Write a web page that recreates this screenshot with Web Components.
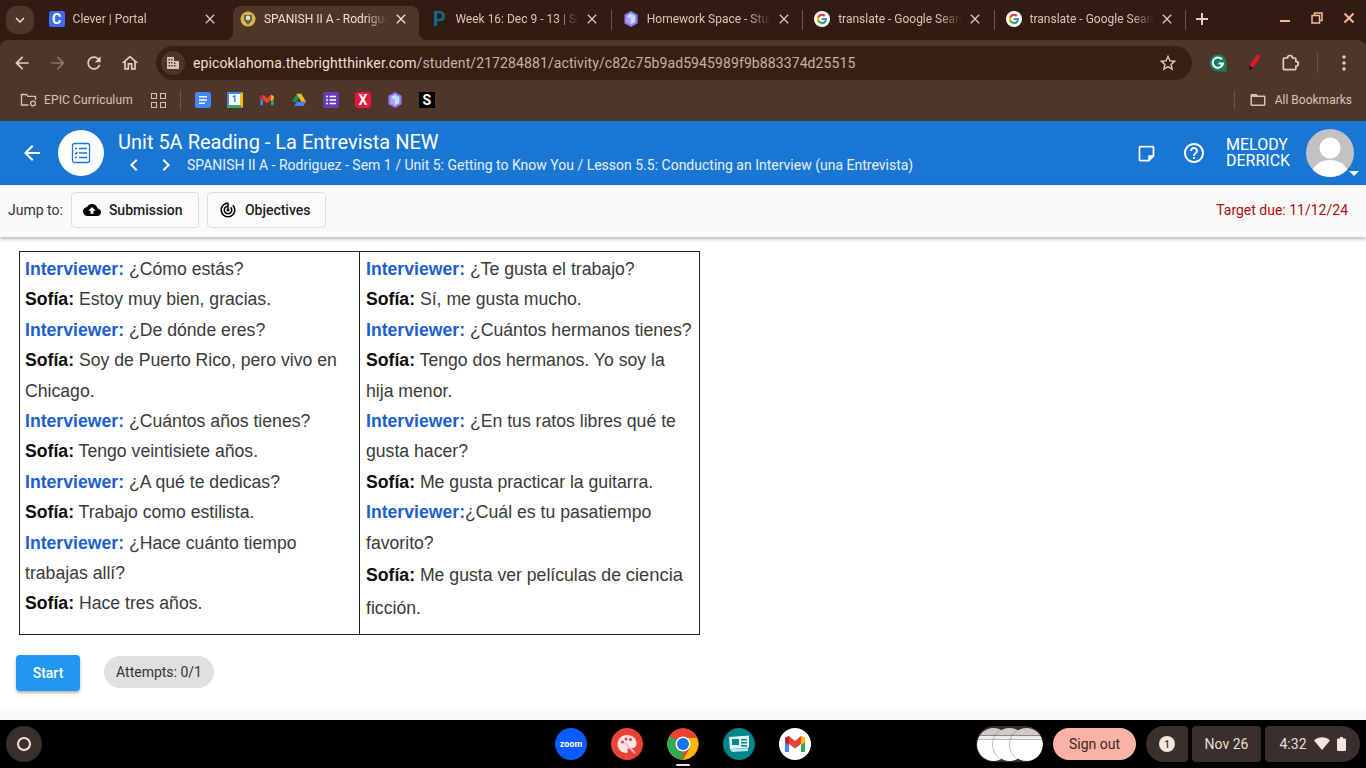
<!DOCTYPE html>
<html lang="en">
<head>
<meta charset="utf-8">
<title>Unit 5A Reading</title>
<style>
  html, body { margin: 0; height: 100%; overflow: hidden; background: #fff; font-family: Roboto, "Liberation Sans", sans-serif; }
  body { display: flex; flex-direction: column; width: 1366px; height: 768px; }
  main-area { flex: 1; }
</style>
</head>
<body>
<browser-frame></browser-frame>
<app-header></app-header>
<jump-bar></jump-bar>
<main-area>
  <interview-table>
    <talk-line slot="left" who="i">¿Cómo estás?</talk-line>
    <talk-line slot="left" who="s">Estoy muy bien, gracias.</talk-line>
    <talk-line slot="left" who="i">¿De dónde eres?</talk-line>
    <talk-line slot="left" who="s">Soy de Puerto Rico, pero vivo en Chicago.</talk-line>
    <talk-line slot="left" who="i">¿Cuántos años tienes?</talk-line>
    <talk-line slot="left" who="s">Tengo veintisiete años.</talk-line>
    <talk-line slot="left" who="i">¿A qué te dedicas?</talk-line>
    <talk-line slot="left" who="s">Trabajo como estilista.</talk-line>
    <talk-line slot="left" who="i">¿Hace cuánto tiempo trabajas allí?</talk-line>
    <talk-line slot="left" who="s">Hace tres años.</talk-line>
    <talk-line slot="right" who="i">¿Te gusta el trabajo?</talk-line>
    <talk-line slot="right" who="s">Sí, me gusta mucho.</talk-line>
    <talk-line slot="right" who="i">¿Cuántos hermanos tienes?</talk-line>
    <talk-line slot="right" who="s">Tengo dos hermanos. Yo soy la hija menor.</talk-line>
    <talk-line slot="right" who="i">¿En tus ratos libres qué te gusta hacer?</talk-line>
    <talk-line slot="right" who="s">Me gusta practicar la guitarra.</talk-line>
    <talk-line slot="right" who="i" tight>¿Cuál es tu pasatiempo favorito?</talk-line>
    <talk-line slot="right" who="s" tall>Me gusta ver películas de <span style="font-size:18.4px">ciencia</span> ficción.</talk-line>
  </interview-table>
  <start-row></start-row>
</main-area>
<page-foot></page-foot>
<os-shelf></os-shelf>

<script>
const svg = (d, size, fill, extra = '') =>
  `<svg width="${size}" height="${size}" viewBox="0 0 24 24" fill="${fill}" ${extra}><path d="${d}"/></svg>`;

const ICON = {
  back: 'M20 11H7.83l5.59-5.59L12 4l-8 8 8 8 1.41-1.41L7.83 13H20v-2z',
  forward: 'M12 4l-1.41 1.41L16.17 11H4v2h12.17l-5.58 5.59L12 20l8-8z',
  reload: 'M17.65 6.35C16.2 4.9 14.21 4 12 4c-4.42 0-7.99 3.58-7.99 8s3.57 8 7.99 8c3.73 0 6.84-2.55 7.73-6h-2.08c-.82 2.33-3.04 4-5.65 4-3.31 0-6-2.69-6-6s2.69-6 6-6c1.66 0 3.14.69 4.22 1.78L13 11h7V4l-2.35 2.35z',
  home: 'M12 5.69l5 4.5V18h-2v-6H9v6H7v-7.81l5-4.5M12 3L2 12h3v8h6v-6h2v6h6v-8h3L12 3z',
  star: 'M22 9.24l-7.19-.62L12 2 9.19 8.63 2 9.24l5.46 4.73L5.82 21 12 17.27 18.18 21l-1.63-7.03L22 9.24zM12 15.4l-3.76 2.27 1-4.28-3.32-2.88 4.38-.38L12 6.1l1.71 4.04 4.38.38-3.32 2.88 1 4.28L12 15.4z',
  puzzle: 'M5 6h4c0-2 1-3 3-3s3 1 3 3h3a1 1 0 0 1 1 1v3c2 0 3 1 3 3s-1 3-3 3v3a1 1 0 0 1-1 1H5a1 1 0 0 1-1-1V7a1 1 0 0 1 1-1z',
  close: 'M19 6.41L17.59 5 12 10.59 6.41 5 5 6.41 10.59 12 5 17.59 6.41 19 12 13.41 17.59 19 19 17.59 13.41 12z',
  chevDown: 'M7.41 8.59L12 13.17l4.59-4.58L18 10l-6 6-6-6z',
  chevLeft: 'M15.41 7.41L14 6l-6 6 6 6 1.41-1.41L10.83 12z',
  chevRight: 'M10 6L8.59 7.41 13.17 12l-4.58 4.59L10 18l6-6z',
  cloud: 'M19.35 10.04C18.67 6.59 15.64 4 12 4 9.11 4 6.6 5.64 5.35 8.04 2.34 8.36 0 10.91 0 14c0 3.31 2.69 6 6 6h13c2.76 0 5-2.24 5-5 0-2.64-2.05-4.78-4.65-4.96zM14 13v4h-4v-4H7l5-5 5 5h-3z',
  target: 'M19.07 4.93l-1.41 1.41C19.1 7.79 20 9.79 20 12c0 4.42-3.58 8-8 8s-8-3.58-8-8c0-4.08 3.05-7.44 7-7.93v2.02C8.16 6.57 6 9.03 6 12c0 3.31 2.69 6 6 6s6-2.69 6-6c0-1.66-.67-3.16-1.76-4.24l-1.41 1.41C15.55 9.9 16 10.9 16 12c0 2.21-1.79 4-4 4s-4-1.79-4-4c0-1.86 1.28-3.41 3-3.86v2.14c-.6.35-1 .98-1 1.72 0 1.1.9 2 2 2s2-.9 2-2c0-.74-.4-1.38-1-1.72V2h-1C6.48 2 2 6.48 2 12s4.48 10 10 10 10-4.48 10-10c0-2.76-1.12-5.26-2.93-7.07z',
  help: 'M11 18h2v-2h-2v2zm1-16C6.48 2 2 6.48 2 12s4.48 10 10 10 10-4.48 10-10S17.52 2 12 2zm0 18c-4.41 0-8-3.59-8-8s3.59-8 8-8 8 3.59 8 8-3.59 8-8 8zm0-14c-2.21 0-4 1.79-4 4h2c0-1.1.9-2 2-2s2 .9 2 2c0 2-3 1.75-3 5h2c0-2.25 3-2.5 3-5 0-2.21-1.79-4-4-4z',
  note: 'M19 5v9h-5v5H5V5h14m0-2H5c-1.1 0-2 .9-2 2v14c0 1.1.9 2 2 2h10l6-6V5c0-1.1-.9-2-2-2z',
  folder: 'M20 6h-8l-2-2H4c-1.1 0-1.99.9-1.99 2L2 18c0 1.1.9 2 2 2h16c1.1 0 2-.9 2-2V8c0-1.1-.9-2-2-2zm0 12H4V8h16v10z'
};

const googleG = `<svg width="16" height="16" viewBox="0 0 24 24" style="display:block"><circle cx="12" cy="12" r="12" fill="#fff"/><g transform="translate(3.6 3.6) scale(.7)"><path fill="#4285F4" d="M22.56 12.25c0-.78-.07-1.53-.2-2.25H12v4.26h5.92c-.26 1.37-1.04 2.53-2.21 3.31v2.77h3.57c2.08-1.92 3.28-4.74 3.28-8.09z"/><path fill="#34A853" d="M12 23c2.97 0 5.46-.98 7.28-2.66l-3.57-2.77c-.98.66-2.23 1.06-3.71 1.06-2.86 0-5.29-1.93-6.16-4.53H2.18v2.84C3.99 20.53 7.7 23 12 23z"/><path fill="#FBBC05" d="M5.84 14.09c-.22-.66-.35-1.36-.35-2.09s.13-1.43.35-2.09V7.07H2.18C1.43 8.55 1 10.22 1 12s.43 3.45 1.18 4.93l3.66-2.84z"/><path fill="#EA4335" d="M12 5.38c1.62 0 3.06.56 4.21 1.64l3.15-3.15C17.45 2.09 14.97 1 12 1 7.7 1 3.99 3.47 2.18 7.07l3.66 2.84c.87-2.6 3.3-4.53 6.16-4.53z"/></g></svg>`;

const gem = `<svg width="16" height="16" viewBox="0 0 16 16" style="display:block"><path d="M8 0l6.6 3.8v8.4L8 16l-6.6-3.8V3.8z" fill="#8f7bf0"/><path d="M8 2.5l4.3 2.5v6L8 13.5 3.7 11V5z" fill="#c9dcff"/><path d="M8 2.5V8l4.3-3z" fill="#9fe6ea"/><path d="M8 8v5.5L3.7 11V5z" fill="#b79cf5"/></svg>`;

const crest = `<svg width="16" height="16" viewBox="0 0 16 16" style="display:block"><circle cx="8" cy="8" r="7.5" fill="#d9b84a"/><path d="M4 4h8v5l-4 5-4-5z" fill="#5c5a4e"/><circle cx="8" cy="7" r="2.4" fill="#e8dcc0"/></svg>`;

const mFavicon = `<svg width="16" height="16" viewBox="0 0 24 24" style="display:block"><path d="M2 6v14h4V10z" fill="#4285f4"/><path d="M22 6v14h-4V10z" fill="#34a853"/><path d="M2 6l4-2 6 5 6-5 4 2v4l-4 2-6 4.5L6 12l-4-2z" fill="#ea4335"/><path d="M18 4l4 2v4l-4 3z" fill="#fbbc04"/><path d="M2 6v4l4 3V4z" fill="#c5221f"/></svg>`;

const drive = `<svg width="16" height="16" viewBox="0 0 24 24" style="display:block"><path d="M8.5 2.5h7l-7 12h-7z" fill="#0f9d58"/><path d="M15.5 2.5l7 12h-7l-7-12z" fill="#fbbc04"/><path d="M5 21l3.5-6.5h14L19 21z" fill="#4285f4"/></svg>`;

function tile(bg, inner, radius = 2) {
  return `<span style="width:16px;height:16px;background:${bg};border-radius:${radius}px;display:flex;align-items:center;justify-content:center;overflow:hidden;flex:none">${inner}</span>`;
}
const rows = c => `<svg width="12" height="12" viewBox="0 0 12 12"><path d="M2 2h8v1.5H2zM2 5.3h8v1.5H2zM2 8.5h6V10H2z" fill="${c}"/></svg>`;
const formRows = `<svg width="12" height="12" viewBox="0 0 12 12" fill="#fff"><circle cx="2" cy="2.5" r="1"/><circle cx="2" cy="6" r="1"/><circle cx="2" cy="9.5" r="1"/><path d="M4.5 1.8H11v1.4H4.5zM4.5 5.3H11v1.4H4.5zM4.5 8.8H11v1.4H4.5z"/></svg>`;

function shadow(el, css, html) {
  el.attachShadow({ mode: 'open' });
  el.shadowRoot.innerHTML = `<style>${css}</style>${html}`;
}

class BrowserTab extends HTMLElement {
  connectedCallback() {
    shadow(this, `
      :host { display: flex; flex: 0 0 191.4px; height: 34px; position: relative; align-items: center; box-sizing: border-box; padding: 0 0 8px 9px; color: #dcc5b9; font-size: 12px; }
      :host([active]) { color: #f2dfd3; }
      :host([active])::before { content: ""; position: absolute; left: 2px; right: 3px; top: 0; bottom: 0; background: #50352b; border-radius: 8px 8px 0 0; }
      :host([active])::after { content: ""; position: absolute; left: -6px; right: -5px; bottom: 0; height: 8px;
        background:
          radial-gradient(circle at 0 0, transparent 8px, #50352b 8.5px) 0 0 / 8px 8px no-repeat,
          radial-gradient(circle at 100% 0, transparent 8px, #50352b 8.5px) 100% 0 / 8px 8px no-repeat; }
      :host([sep]) .sep { display: block; }
      .sep { display: none; position: absolute; right: 2px; top: 4px; width: 1px; height: 20px; background: #6f5549; }
      .icon { width: 16px; height: 16px; flex: none; position: relative; z-index: 1; }
      .label { position: relative; z-index: 1; margin-left: 8px; width: 124px; white-space: nowrap; overflow: hidden; line-height: 16px;
        -webkit-mask-image: linear-gradient(to right, #000 82%, transparent); mask-image: linear-gradient(to right, #000 82%, transparent); }
      .x { position: relative; z-index: 1; margin-left: 5px; width: 16px; height: 16px; color: inherit; }
      svg { display: block; }
    `, `<span class="icon"><slot name="icon"></slot></span><span class="label"><slot></slot></span>
        <span class="x">${svg(ICON.close, 16, 'currentColor')}</span><span class="sep"></span>`);
  }
}

class BrowserFrame extends HTMLElement {
  connectedCallback() {
    const tabs = [
      ['Clever | Portal', tile('#4067f5', '<span style="color:#fff;font:700 14px Roboto,sans-serif">C</span>'), '', ''],
      ['SPANISH II A - Rodriguez', crest, 'active', ''],
      ['Week 16: Dec 9 - 13 | Schoology', '<span style="display:block;color:#0f6d8c;font:700 20px/16px Roboto,sans-serif;width:16px;overflow:hidden;text-align:center">P</span>', '', 'sep'],
      ['Homework Space - Student', gem, '', 'sep'],
      ['translate - Google Search', googleG, '', 'sep'],
      ['translate - Google Search', googleG, '', 'sep']
    ];
    const marks = [
      tile('#4285f4', rows('#fff')),
      tile('#fff', '<span style="color:#1a73e8;font:700 9px Roboto,sans-serif;border:2px solid #4285f4;border-bottom:3px solid #34a853;border-right:3px solid #fbbc04;width:16px;height:16px;text-align:center;line-height:11px;box-sizing:border-box;display:block">1</span>'),
      mFavicon, drive,
      tile('#673ab7', formRows),
      tile('#e8173c', '<span style="color:#fff;font:700 14px Roboto,sans-serif">X</span>', 3),
      gem,
      tile('#000', '<span style="color:#fff;font:700 14px Roboto,sans-serif">S</span>', 0)
    ];
    shadow(this, `
      :host { display: block; height: 120px; background: #321b10; color: #e5cfc3; font-family: Roboto, sans-serif; }
      svg { display: block; }
      .strip { display: flex; height: 40px; box-sizing: border-box; padding-top: 6px; padding-left: 6px; }
      .more { width: 28px; height: 28px; margin-right: 5.6px; border-radius: 10px; background: #50352b; display: flex; align-items: center; justify-content: center; color: #f2dfd3; flex: none; }
      .plus { width: 28px; height: 26px; display: flex; align-items: center; justify-content: center; color: #e5cfc3; }
      .win { margin-left: auto; display: flex; color: #f9b99b; margin-top: -1px; align-items: flex-start; padding-right: 1px; }
      .win span { width: 32px; height: 26px; display: flex; align-items: center; justify-content: center; }
      .bar { background: #50352b; border-radius: 8px 8px 0 0; height: 80px; }
      .tools { display: flex; height: 40px; align-items: center; padding-left: 4px; box-sizing: border-box; padding-top: 6px; }
      .btn { width: 36px; height: 34px; display: flex; align-items: center; justify-content: center; flex: none; color: #e5cfc3; }
      .btn.off { color: #8f7569; }
      .omni { margin-left: 8px; width: 1036px; height: 34px; background: #362014; border-radius: 17px; display: flex; align-items: center; margin-right: 8px; flex: none; font-size: 14px; box-sizing: border-box; padding-left: 5px; }
      .site { width: 24px; height: 24px; border-radius: 50%; background: #50352b; display: flex; align-items: center; justify-content: center; margin-right: 8px; }
      .url { color: #c9b2a6; white-space: nowrap; flex: 1; letter-spacing: .1px; }
      .url b { color: #f2dfd3; font-weight: 400; }
      .star { margin-right: 14px; color: #e5cfc3; }
      .divider { width: 1px; height: 20px; background: #6f5549; flex: none; }
      .marks { display: flex; height: 40px; align-items: center; padding-left: 20px; font-size: 12px; color: #d9c3b7; }
      .mark { display: flex; align-items: center; gap: 7px; letter-spacing: .13px; }
      .apps { margin-left: 18px; display: grid; grid-template-columns: 6px 6px; gap: 3px; }
      .apps i { width: 6px; height: 6px; box-sizing: border-box; border: 1.5px solid #d9c3b7; display: block; }
      .favs { display: flex; gap: 16px; margin-left: 14px; }
      .all { margin-left: auto; display: flex; align-items: center; padding-right: 14px; }
      .all svg { margin: 0 8px 0 14px; }
    `, `
      <div class="strip">
        <span class="more">${svg(ICON.chevDown, 18, 'currentColor')}</span>
        ${tabs.map(t => `<browser-tab ${t[2]} ${t[3]}><span slot="icon">${t[1]}</span>${t[0]}</browser-tab>`).join('')}
        <span class="plus"><svg width="14" height="14" viewBox="0 0 14 14"><path d="M6 1h2v5h5v2H8v5H6V8H1V6h5z" fill="currentColor"/></svg></span>
        <div class="win">
          <span><svg width="12" height="12" viewBox="0 0 12 12"><path d="M1 8h10v2H1z" fill="currentColor"/></svg></span>
          <span><svg width="12" height="12" viewBox="0 0 12 12" fill="none" stroke="currentColor" stroke-width="1.5"><path d="M3.5 3V1H11v7.5H9"/><path d="M1 3.5h7.5V11H1z" fill="#321b10"/></svg></span>
          <span><svg width="12" height="12" viewBox="0 0 12 12"><path d="M1.5 1.5l9 9M10.5 1.5l-9 9" stroke="currentColor" stroke-width="2"/></svg></span>
        </div>
      </div>
      <div class="bar">
        <div class="tools">
          <span class="btn">${svg(ICON.back, 20, 'currentColor')}</span>
          <span class="btn off">${svg(ICON.forward, 20, 'currentColor')}</span>
          <span class="btn">${svg(ICON.reload, 20, 'currentColor')}</span>
          <span class="btn">${svg(ICON.home, 20, 'currentColor')}</span>
          <div class="omni">
            <span class="site"><svg width="14" height="14" viewBox="0 0 14 14" fill="#d9c3b7"><path d="M1 1h7v4h5v8H1zM2.5 3v1.5H4V3zM5 3v1.5h1.5V3zM2.5 6v1.5H4V6zM5 6v1.5h1.5V6zM2.5 9v1.5H4V9zM5 9v1.5h1.5V9zM8 6.5V8h1.5V6.5zM8 9v1.5h1.5V9z" fill-rule="evenodd"/></svg></span>
            <span class="url"><b>epicoklahoma.thebrightthinker.com</b>/student/217284881/activity/c82c75b9ad5945989f9b883374d25515</span>
            <span class="star">${svg(ICON.star, 20, 'currentColor')}</span>
          </div>
          <span class="btn"><svg width="18" height="18" viewBox="0 0 18 18"><path d="M9 .5A8.5 8.5 0 0 1 17.5 9v8.5H9A8.5 8.5 0 0 1 9 .5z" fill="#15805f"/><path d="M13 5.4A5.2 5.2 0 1 0 14 9.5H9.5" fill="none" stroke="#fff" stroke-width="2"/></svg></span>
          <span class="btn"><svg width="20" height="20" viewBox="0 0 20 20"><path d="M13 1l3.5 2.5L9 15l-3.5-2.5z" fill="#e01b1b"/><path d="M5.5 12.5L9 15l-3.8 2z" fill="#1b1110"/></svg></span>
          <span class="btn">${svg(ICON.puzzle, 20, 'none', 'stroke="currentColor" stroke-width="2"')}</span>
          <span class="divider" style="margin-left:9px"></span>
          <span class="btn" style="margin-left:8px"><svg width="4" height="18" viewBox="0 0 4 18" fill="currentColor"><circle cx="2" cy="3" r="1.7"/><circle cx="2" cy="9" r="1.7"/><circle cx="2" cy="15" r="1.7"/></svg></span>
        </div>
        <div class="marks">
          <span class="mark"><svg width="17" height="16" viewBox="0 0 17 16" fill="none" stroke="currentColor" stroke-width="1.3"><path d="M8.5 13H1.5V2.5h5L8 4.3h7.5V8"/><circle cx="13" cy="11.5" r="2.4"/></svg>EPIC Curriculum</span>
          <span class="apps"><i></i><i></i><i></i><i></i></span>
          <span class="divider" style="margin-left:14px"></span>
          <span class="favs">${marks.map(m => `<span style="width:16px;height:16px;display:block">${m}</span>`).join('')}</span>
          <span class="all"><span class="divider"></span>${svg(ICON.folder, 18, 'currentColor')}All Bookmarks</span>
        </div>
      </div>`);
  }
}

class AppHeader extends HTMLElement {
  connectedCallback() {
    shadow(this, `
      :host { display: flex; height: 65px; box-sizing: border-box; border-top: 1px solid #3c3f46; background: #1976d2; color: #fff; align-items: center; font-family: Roboto, sans-serif; }
      svg { display: block; }
      .back { margin-left: 20px; }
      .badge { margin-left: 14px; width: 46px; height: 46px; border-radius: 50%; background: #fff; display: flex; align-items: center; justify-content: center; flex: none; }
      .titles { margin-left: 14px; margin-top: -2px; }
      .title { font-size: 20px; line-height: 24px; }
      .crumbs { display: flex; align-items: center; height: 20px; margin-top: 1px; margin-left: 4px; font-size: 14px; gap: 8px; }
      .crumbs .path { margin-left: 1px; white-space: nowrap; color: #e8f1fb; }
      .right { margin-left: auto; display: flex; align-items: center; padding-right: 12px; }
      .note { width: 24px; display: flex; justify-content: center; }
      .name { margin-left: 20px; font-size: 16px; line-height: 16px; width: 64px; }
      .avatar { margin-left: 16px; width: 48px; height: 48px; position: relative; }
      .avatar svg { border-radius: 50%; }
      .avatar::after { content: ""; position: absolute; right: -5px; bottom: 1px; border: 5px solid transparent; border-top-color: #fff; border-bottom: 0; }
    `, `
      <span class="back">${svg(ICON.back, 24, '#fff')}</span>
      <span class="badge"><svg width="22" height="22" viewBox="0 0 22 22" fill="none" stroke="#1976d2" stroke-width="1.3"><rect x="2.5" y="1.5" width="17" height="19" rx="2"/><path d="M9 6.5h8M9 11h8M9 15.5h8"/><path d="M5 6.5h2M5 11l1 1 1.5-2M5 15.5h2"/></svg></span>
      <div class="titles">
        <div class="title">Unit 5A Reading - La Entrevista NEW</div>
        <div class="crumbs">${svg(ICON.chevLeft, 24, '#fff')}${svg(ICON.chevRight, 24, '#fff')}
          <span class="path">SPANISH II A - Rodriguez - Sem 1 / Unit 5: Getting to Know You / Lesson 5.5: Conducting an Interview (una Entrevista)</span></div>
      </div>
      <div class="right">
        <span class="note">${svg(ICON.note, 21, '#fff')}</span>
        <span style="margin-left:24px">${svg(ICON.help, 24, '#fff')}</span>
        <div class="name">MELODY DERRICK</div>
        <div class="avatar"><svg width="48" height="48" viewBox="0 0 48 48"><rect width="48" height="48" fill="#c2c2c2"/><circle cx="24" cy="19" r="10.5" fill="#fff"/><ellipse cx="24" cy="45" rx="18" ry="14" fill="#fff"/></svg></div>
      </div>`);
  }
}

class JumpBar extends HTMLElement {
  connectedCallback() {
    shadow(this, `
      :host { display: flex; height: 52px; box-sizing: border-box; flex: none; background: #fafafa; align-items: center; padding: 0 18px 2px 8px; font-size: 14px; color: #333; position: relative; z-index: 2; box-shadow: 0 2px 4px rgba(0,0,0,.28); font-family: Roboto, sans-serif; }
      svg { display: block; }
      .btn { height: 36px; box-sizing: border-box; border: 1px solid #ddd; border-radius: 4px; background: #fbfbfb; display: flex; align-items: center; font-weight: 500; color: #1c1c1c; gap: 8px; }
      .due { margin-left: auto; color: #b00c0c; }
    `, `
      <span>Jump to:</span>
      <span class="btn" style="margin-left:8px;width:128px;padding-left:11px">${svg(ICON.cloud, 18, '#000')}Submission</span>
      <span class="btn" style="margin-left:8px;width:119px;padding-left:11px">${svg(ICON.target, 18, '#000')}Objectives</span>
      <span class="due">Target due: 11/12/24</span>`);
  }
}

class TalkLine extends HTMLElement {
  connectedCallback() {
    const interviewer = this.getAttribute('who') === 'i';
    shadow(this, `
      :host { display: block; line-height: 30.4px; }
      :host([tall]) { line-height: 33px; }
      b { color: #0d0d0d; }
      b.i { color: #1c60cf; }
    `, `<b class="${interviewer ? 'i' : ''}">${interviewer ? 'Interviewer:' : 'Sofía:'}</b>${this.hasAttribute('tight') ? '' : ' '}<slot></slot>`);
  }
}

class InterviewTable extends HTMLElement {
  connectedCallback() {
    shadow(this, `
      :host { display: grid; grid-template-columns: 340px 340px; width: 681px; height: 384px; margin: 14px 0 0 19px; box-sizing: border-box; border: 1px solid #222; background: #fff; font: 17.65px/30.4px "Liberation Sans", Arial, sans-serif; color: #3a3a3a; }
      div { padding: 2px 6px 0 6px; box-sizing: border-box; }
      .l { border-right: 1px solid #222; padding-left: 5px; }
    `, `<div class="l"><slot name="left"></slot></div><div><slot name="right"></slot></div>`);
  }
}

class StartRow extends HTMLElement {
  connectedCallback() {
    shadow(this, `
      :host { display: flex; align-items: flex-start; gap: 24px; margin: 20px 0 0 16px; font-family: Roboto, sans-serif; font-size: 14px; }
      .start { width: 64px; height: 36px; border-radius: 4px; background: #2196f3; color: #fff; font-weight: 500; display: flex; align-items: center; justify-content: center; box-shadow: 0 2px 3px rgba(0,0,0,.3); }
      .chip { margin-top: 1px; height: 32px; width: 110px; border-radius: 16px; background: #e0e0e0; color: #333; display: flex; align-items: center; justify-content: center; }
    `, `<span class="start">Start</span><span class="chip">Attempts: 0/1</span>`);
  }
}

class PageFoot extends HTMLElement {
  connectedCallback() {
    shadow(this, `:host { display: block; height: 11px; flex: none; background: #fafafa; }`, '');
  }
}

class OsShelf extends HTMLElement {
  connectedCallback() {
    shadow(this, `
      :host { display: grid; grid-template-columns: 1fr auto 1fr; height: 48px; flex: none; background: #000; align-items: center; font-family: Roboto, sans-serif; color: #eadfd9; font-size: 14px; }
      svg { display: block; }
      .launcher { margin-left: 6px; width: 36px; height: 36px; border-radius: 50%; background: #3a2f2c; display: flex; align-items: center; justify-content: center; }
      .launcher i { width: 14px; height: 14px; box-sizing: border-box; border: 2px solid #f5e6dd; border-radius: 50%; display: block; }
      .apps { display: flex; gap: 24px; position: relative; }
      .app { width: 32px; height: 32px; border-radius: 50%; display: flex; align-items: center; justify-content: center; overflow: hidden; }
      .zoom { background: #0b5cff; color: #fff; font-size: 9px; font-weight: 700; }
      .apps::after { content: ""; position: absolute; left: 121px; bottom: -6px; width: 14px; height: 2px; border-radius: 1px; background: #f3ded5; }
      .tray { display: flex; justify-content: flex-end; align-items: center; padding-right: 6px; }
      .thumbs { display: flex; width: 67px; height: 36px; border-radius: 18px; background: #3a2f2c; align-items: center; box-sizing: border-box; overflow: hidden; padding-left: .5px; }
      .thumbs i { display: block; width: 33px; height: 33px; margin-right: -16.5px; border-radius: 50%; background: linear-gradient(#cfcac7 0 7px, #8a8a8a 7px 8px, #ececec 8px 11px, #b5b5b5 11px 12px, #fff 12px); box-shadow: -1px 0 1px rgba(0,0,0,.3); flex: none; }
      .sign { margin-left: 10px; width: 83px; height: 32px; border-radius: 16px; background: #fcb1a5; color: #3d2320; display: flex; align-items: center; justify-content: center; }
      .pod { height: 36px; background: #3a2f2c; display: flex; align-items: center; justify-content: center; border-radius: 4px; margin-left: 4px; }
      .num { width: 16px; height: 16px; border-radius: 50%; background: #f5e6dd; color: #3a2f2c; font-size: 10px; font-weight: 500; display: flex; align-items: center; justify-content: center; }
    `, `
      <div class="launcher"><i></i></div>
      <div class="apps">
        <span class="app zoom">zoom</span>
        <span class="app" style="background:#ea4335"><svg width="22" height="22" viewBox="0 0 22 22"><path d="M11 2C5.5 2 1.5 6 1.5 11s4 9 8.5 9c2 0 2-1.5 1.5-2.5-.6-1.4.4-2.5 2-2.5h3c2 0 4-1.5 4-4.5C20.5 5.5 16.5 2 11 2z" fill="#fbe3e6"/><circle cx="6.5" cy="9" r="1.5" fill="#ea4335"/><circle cx="10" cy="6" r="1.5" fill="#ea4335"/><circle cx="14.5" cy="6.5" r="1.5" fill="#ea4335"/><path d="M9 10l10 10" stroke="#f4b6e0" stroke-width="2"/></svg></span>
        <span class="app"><svg width="32" height="32" viewBox="0 0 32 32"><circle cx="16" cy="16" r="16" fill="#ea4335"/><path d="M16 16L2.1 8A16 16 0 0 0 16 32z" fill="#34a853"/><path d="M16 10h13.9A16 16 0 0 1 16 32l6.9-12z" fill="#fbbc04"/><circle cx="16" cy="16" r="7.5" fill="#fff"/><circle cx="16" cy="16" r="6" fill="#1a73e8"/></svg></span>
        <span class="app" style="background:#00858a"><svg width="24" height="20" viewBox="0 0 24 20"><path d="M3 15l18-1v3L5 18z" fill="#bfe6ea"/><path d="M2 3l20-1.5v12L3 15z" fill="#e6f6f8"/><rect x="5" y="5" width="7" height="6" fill="#00858a"/><path d="M14 5h6v1.5h-6zM14 8h6v1.5h-6zM14 11h6v1.5h-6z" fill="#00858a"/></svg></span>
        <span class="app" style="background:#fff"><svg width="24" height="24" viewBox="0 0 24 24"><path d="M2 6v14h4V10z" fill="#4285f4"/><path d="M22 6v14h-4V10z" fill="#34a853"/><path d="M2 6l4-2 6 5 6-5 4 2v4l-4 2-6 4.5L6 12l-4-2z" fill="#ea4335"/><path d="M18 4l4 2v4l-4 3z" fill="#fbbc04"/><path d="M2 6v4l4 3V4z" fill="#c5221f"/></svg></span>
      </div>
      <div class="tray">
        <span class="thumbs"><i></i><i></i><i></i></span>
        <span class="sign">Sign out</span>
        <span class="pod" style="margin-left:10px;width:42px;border-radius:18px 4px 4px 18px"><span class="num">1</span></span>
        <span class="pod" style="width:69px">Nov 26</span>
        <span class="pod" style="width:95px;border-radius:4px 18px 18px 4px;gap:7px">4:32
          <svg width="16" height="14" viewBox="0 0 16 14"><path d="M0 3.5C4.5-.7 11.5-.7 16 3.5L8 13z" fill="#f5e6dd"/></svg>
          <svg width="9" height="14" viewBox="0 0 9 14"><path d="M3 0h3v1.5h2a1 1 0 0 1 1 1V13a1 1 0 0 1-1 1H1a1 1 0 0 1-1-1V2.5a1 1 0 0 1 1-1h2z" fill="#f5e6dd"/></svg>
        </span>
      </div>`);
  }
}

customElements.define('browser-tab', BrowserTab);
customElements.define('browser-frame', BrowserFrame);
customElements.define('app-header', AppHeader);
customElements.define('jump-bar', JumpBar);
customElements.define('talk-line', TalkLine);
customElements.define('interview-table', InterviewTable);
customElements.define('start-row', StartRow);
customElements.define('page-foot', PageFoot);
customElements.define('os-shelf', OsShelf);
</script>
</body>
</html>
